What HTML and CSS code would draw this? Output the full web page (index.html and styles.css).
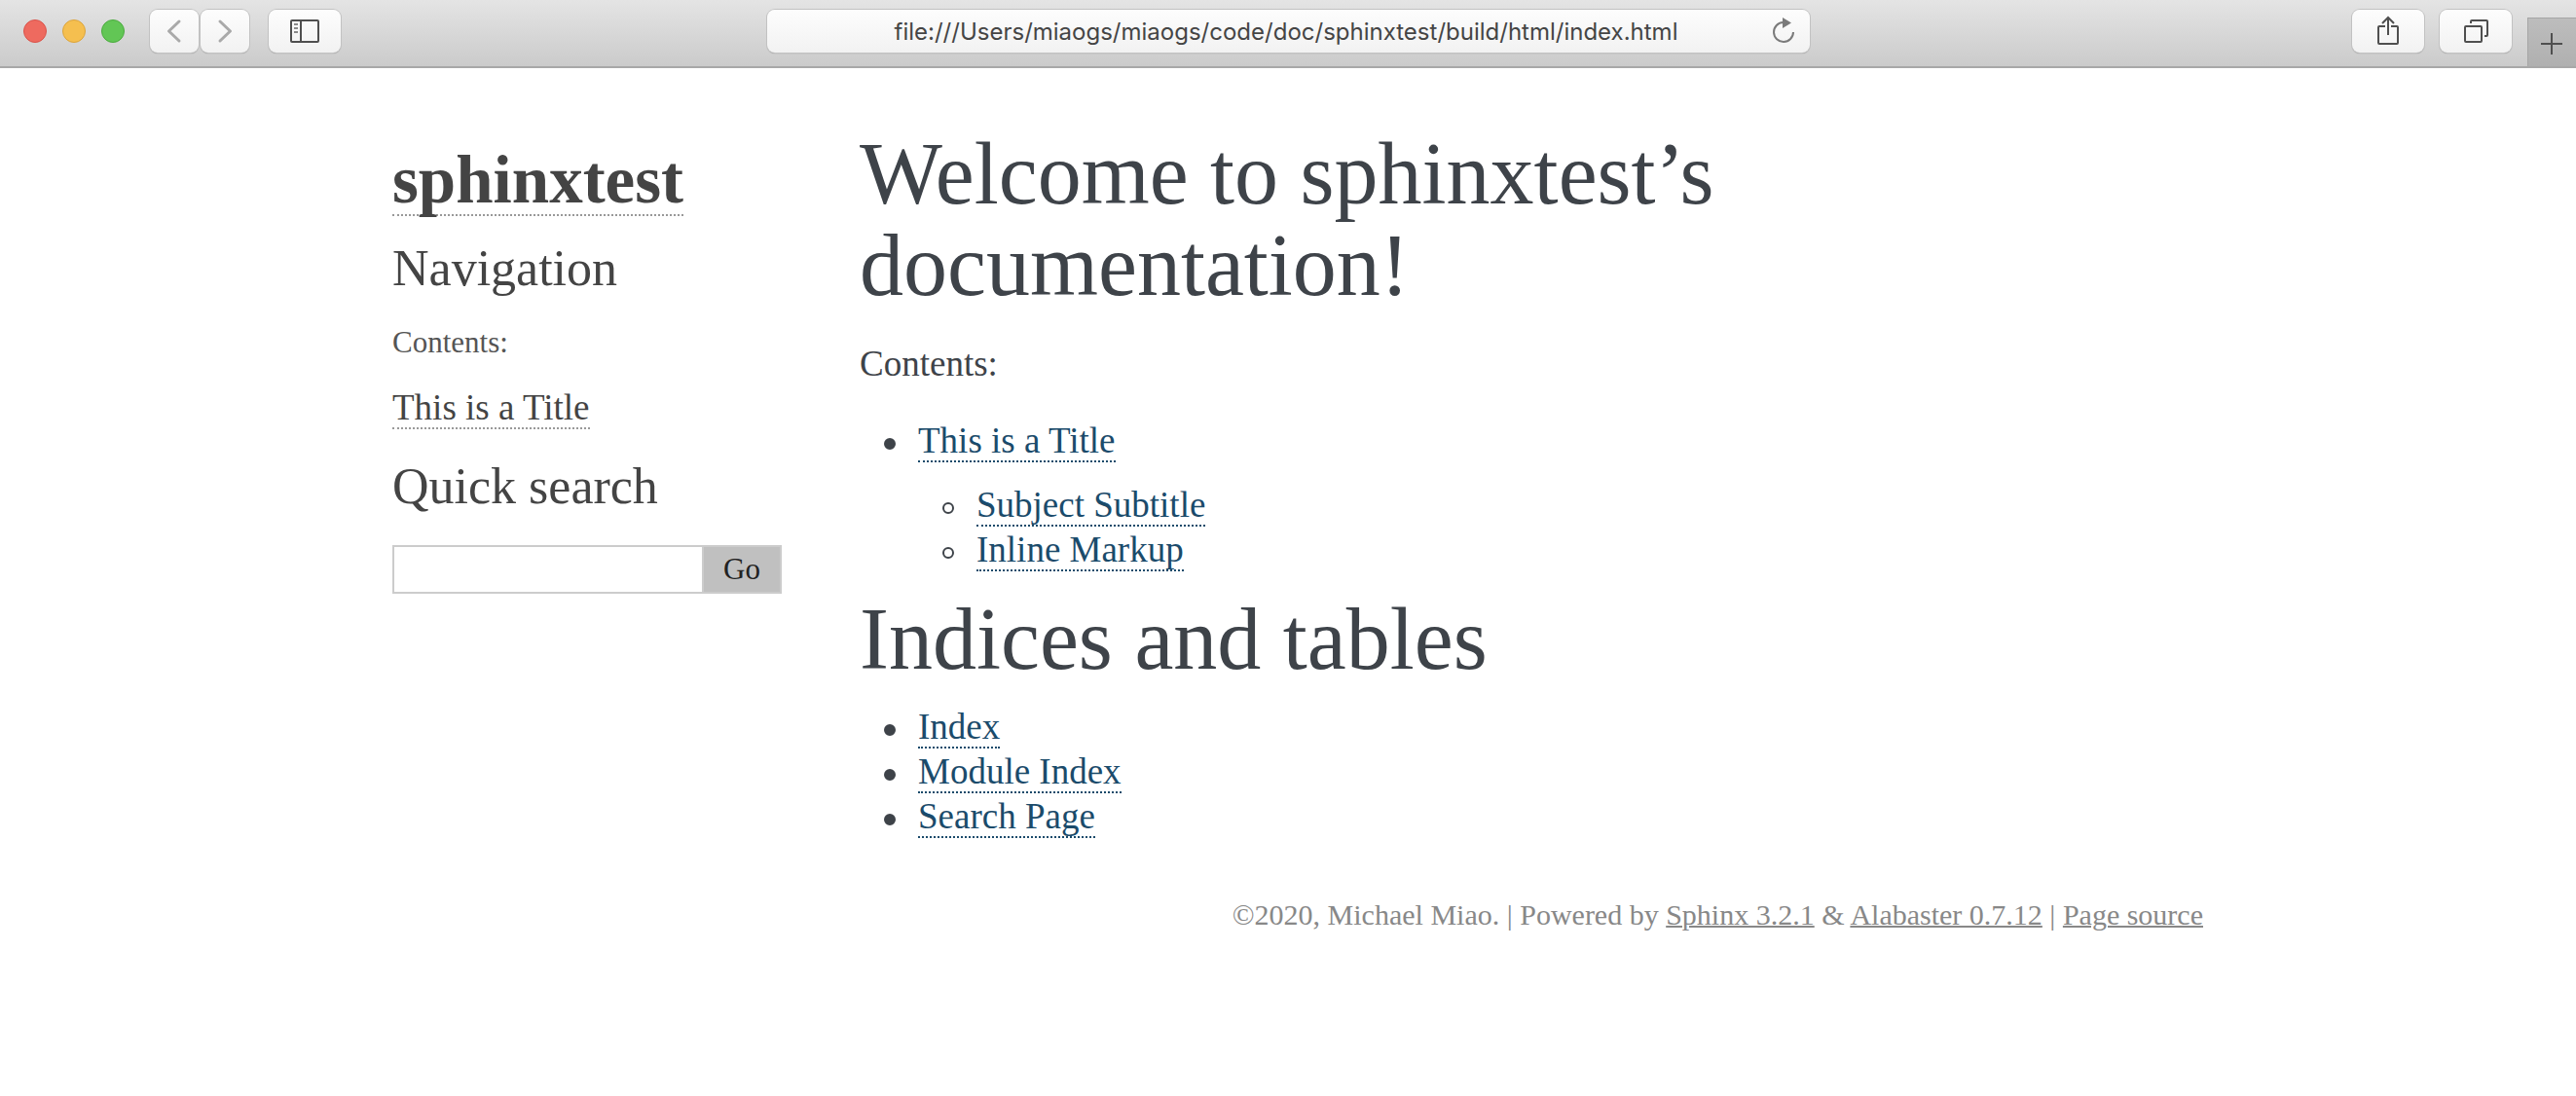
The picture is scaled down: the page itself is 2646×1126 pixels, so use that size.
FILE: index.html
```html
<!DOCTYPE html>
<html lang="en">
<head>
<meta charset="utf-8">
<title>Welcome to sphinxtest’s documentation!</title>
<link rel="stylesheet" href="styles.css">
</head>
<body>
<header class="toolbar">
  <div class="tools tools-left">
    <div class="lights">
      <button class="light close" aria-label="Close"></button>
      <button class="light minimize" aria-label="Minimize"></button>
      <button class="light expand" aria-label="Full screen"></button>
    </div>
    <div class="history">
      <button class="tool narrow" aria-label="Back"><svg width="50" height="44" viewBox="0 0 50 44"><path class="chevron" d="M30 12 19.500 22 30 32"/></svg></button>
      <button class="tool narrow" aria-label="Forward"><svg width="50" height="44" viewBox="0 0 50 44"><path class="chevron" d="M20 12 30.500 22 20 32"/></svg></button>
    </div>
    <button class="tool" aria-label="Show sidebar"><svg width="74" height="44" viewBox="0 0 74 44"><rect class="line" x="23" y="11" width="28" height="22" rx="1"/><path class="line" d="M33 11V33"/><path class="rows" d="M26 15h4M26 19h4M26 23h4"/></svg></button>
  </div>
  <div class="address">
    <input class="url" type="text" aria-label="Address" value="file:///Users/miaogs/miaogs/code/doc/sphinxtest/build/html/index.html">
    <button class="reload" aria-label="Reload"><svg width="28" height="30" viewBox="0 0 28 30"><path class="arc" d="M12.500 6A10 10 0 1 0 23 16"/><path class="head" d="M12 1 21 6.500 12 12Z"/></svg></button>
  </div>
  <div class="tools tools-right">
    <button class="tool" aria-label="Share"><svg width="74" height="44" viewBox="0 0 74 44"><path class="line" d="M34 17H28a1 1 0 0 0-1 1V34a1 1 0 0 0 1 1H46a1 1 0 0 0 1-1V18a1 1 0 0 0-1-1H40M37 26V8M31 14 37 8 43 14"/></svg></button>
    <button class="tool" aria-label="Show all tabs"><svg width="74" height="44" viewBox="0 0 74 44"><rect class="line" x="26" y="17" width="17" height="16" rx="1"/><path class="line" d="M32 14V12a1 1 0 0 1 1-1H48a1 1 0 0 1 1 1V26a1 1 0 0 1-1 1H46"/></svg></button>
    <button class="new-tab" aria-label="New tab"><svg width="50" height="50" viewBox="0 0 50 50"><path class="line" d="M14 27H36M25 16V38"/></svg></button>
  </div>
</header>

<div class="page">
  <div class="columns">
    <aside class="sidebar">
      <h1 class="logo"><a href="#">sphinxtest</a></h1>
      <h3 class="side-title">Navigation</h3>
      <p class="caption">Contents:</p>
      <ul class="side-list"><li><a href="#">This is a Title</a></li></ul>
      <h3 class="side-title search-title" id="search-label">Quick search</h3>
      <form class="search">
        <input class="search-text" type="text" aria-labelledby="search-label">
        <button class="go" type="button">Go</button>
      </form>
    </aside>
    <main class="content">
      <h1 class="heading">Welcome to sphinxtest’s documentation!</h1>
      <p class="intro">Contents:</p>
      <ul class="list">
        <li><a href="#">This is a Title</a>
          <ul class="list sublist">
            <li><a href="#">Subject Subtitle</a></li>
            <li><a href="#">Inline Markup</a></li>
          </ul>
        </li>
      </ul>
      <h1 class="heading section">Indices and tables</h1>
      <ul class="list">
        <li><a href="#">Index</a></li>
        <li><a href="#">Module Index</a></li>
        <li><a href="#">Search Page</a></li>
      </ul>
    </main>
  </div>
  <footer class="footer">©2020, Michael Miao. | Powered by <a href="#">Sphinx 3.2.1</a> &amp; <a href="#">Alabaster 0.7.12</a> | <a href="#">Page source</a></footer>
</div>
</body>
</html>
```
FILE: styles.css
```css
*, *::before { box-sizing: border-box; }

body {
  margin: 0;
  background: #fff;
  color: #3e4349;
  font-family: "Liberation Serif", serif;
  font-size: 37px;
  line-height: 46px;
}

h1, h3, p, ul { margin: 0; padding: 0; font-weight: 400; }
button, input { margin: 0; padding: 0; border: 0; font: inherit; }
svg { display: block; fill: none; }

/* Browser toolbar */
.toolbar {
  display: grid;
  grid-template-columns: 1fr minmax(0, 1071px) 1fr;
  height: 70px;
  background: linear-gradient(#e4e4e4, #cbcbcb);
  border-bottom: 2px solid #a8a8a8;
}
.tools { display: flex; align-items: flex-start; padding-top: 10px; }
.tools-left { gap: 20px; padding-left: 24px; }
.tools-right { gap: 16px; justify-content: flex-end; }
.lights { display: flex; gap: 16px; padding: 10px 6px 0 0; }
.light { width: 24px; height: 24px; border-radius: 50%; }
.close { background: #ee6a5f; border: 1px solid #d9534b; }
.minimize { background: #f5bf4f; border: 1px solid #dba43c; }
.expand { background: #62c655; border: 1px solid #4cab3f; }
.history { display: flex; gap: 2px; }
.tool {
  width: 74px;
  height: 44px;
  border-radius: 8px;
  background: linear-gradient(#fdfdfd, #f2f2f2);
  box-shadow: 0 0 0 1px #c2c2c2, 0 1px 1px 0 #8e8e8e;
}
.narrow { width: 50px; }
.line { stroke: #4f4f4f; stroke-width: 2; }
.rows { stroke: #8a8a8a; stroke-width: 2; }
.chevron { stroke: #a9a9a9; stroke-width: 3; stroke-linecap: round; stroke-linejoin: round; }
.address {
  display: flex;
  align-items: center;
  height: 44px;
  margin-top: 10px;
  padding-right: 12px;
  border-radius: 8px;
  background: linear-gradient(#fdfdfd, #f2f2f2);
  box-shadow: 0 0 0 1px #c2c2c2, 0 1px 1px 0 #8e8e8e;
}
.url {
  flex: 1;
  min-width: 0;
  height: 44px;
  padding: 2px 0 0 36px;
  background: none;
  color: #454545;
  font-family: Inter, sans-serif;
  font-size: 24px;
  text-align: center;
}
.reload { background: none; }
.arc { stroke: #7a7a7a; stroke-width: 2; }
.head { fill: #7a7a7a; }
.new-tab {
  width: 50px;
  height: 50px;
  margin-top: 8px;
  background: linear-gradient(#bdbdbd, #b0b0b0);
  box-shadow: inset 1px 1px 0 #a6a6a6;
}

/* Document */
.page { max-width: 1880px; margin: 62px auto 0; }
.columns { display: flex; gap: 80px; padding: 0 60px 0 20px; }
.sidebar { flex: 0 0 400px; min-width: 0; padding-top: 18px; color: #444; }
.sidebar a { color: #444; text-decoration: none; border-bottom: 2px dotted #999; }
.logo { font-size: 69px; line-height: 70px; font-weight: 700; }
.logo a { display: inline-block; }
.side-title { margin-top: 24px; font-size: 52px; line-height: 60px; }
.caption { margin-top: 24px; color: #555; font-size: 31px; line-height: 44px; }
.side-list { margin-top: 22px; list-style: none; }
.search-title { margin-top: 28px; }
.search { display: flex; height: 50px; margin-top: 30px; }
.search-text { flex: 1; min-width: 0; padding: 0 8px; border: 2px solid #ccc; border-right: 0; font-size: 31px; }
.go { width: 82px; border: 2px solid #ccc; background: #c0c0c0; color: #222; font-size: 31px; line-height: 44px; }

.content { flex: 1; min-width: 0; }
.heading { font-size: 90px; line-height: 94px; }
.intro { margin: 30px 0 32px; line-height: 48px; }
.list { padding-left: 60px; list-style: none; }
.list li::before {
  content: "";
  float: left;
  width: 12px;
  height: 12px;
  margin: 20px 0 0 -35px;
  border: 2px solid #3e4349;
  border-radius: 50%;
  background: #3e4349;
}
.list .sublist li::before { background: none; }
.list a { color: #1b4b6b; text-decoration: none; border-bottom: 2px dotted #1b4b6b; }
.sublist { margin-top: 20px; }
.section { margin: 22px 0 20px; }

.footer { margin-top: 56px; color: #888; font-size: 30px; line-height: 44px; text-align: right; }
.footer a { color: #888; text-decoration-thickness: 2px; }
```
